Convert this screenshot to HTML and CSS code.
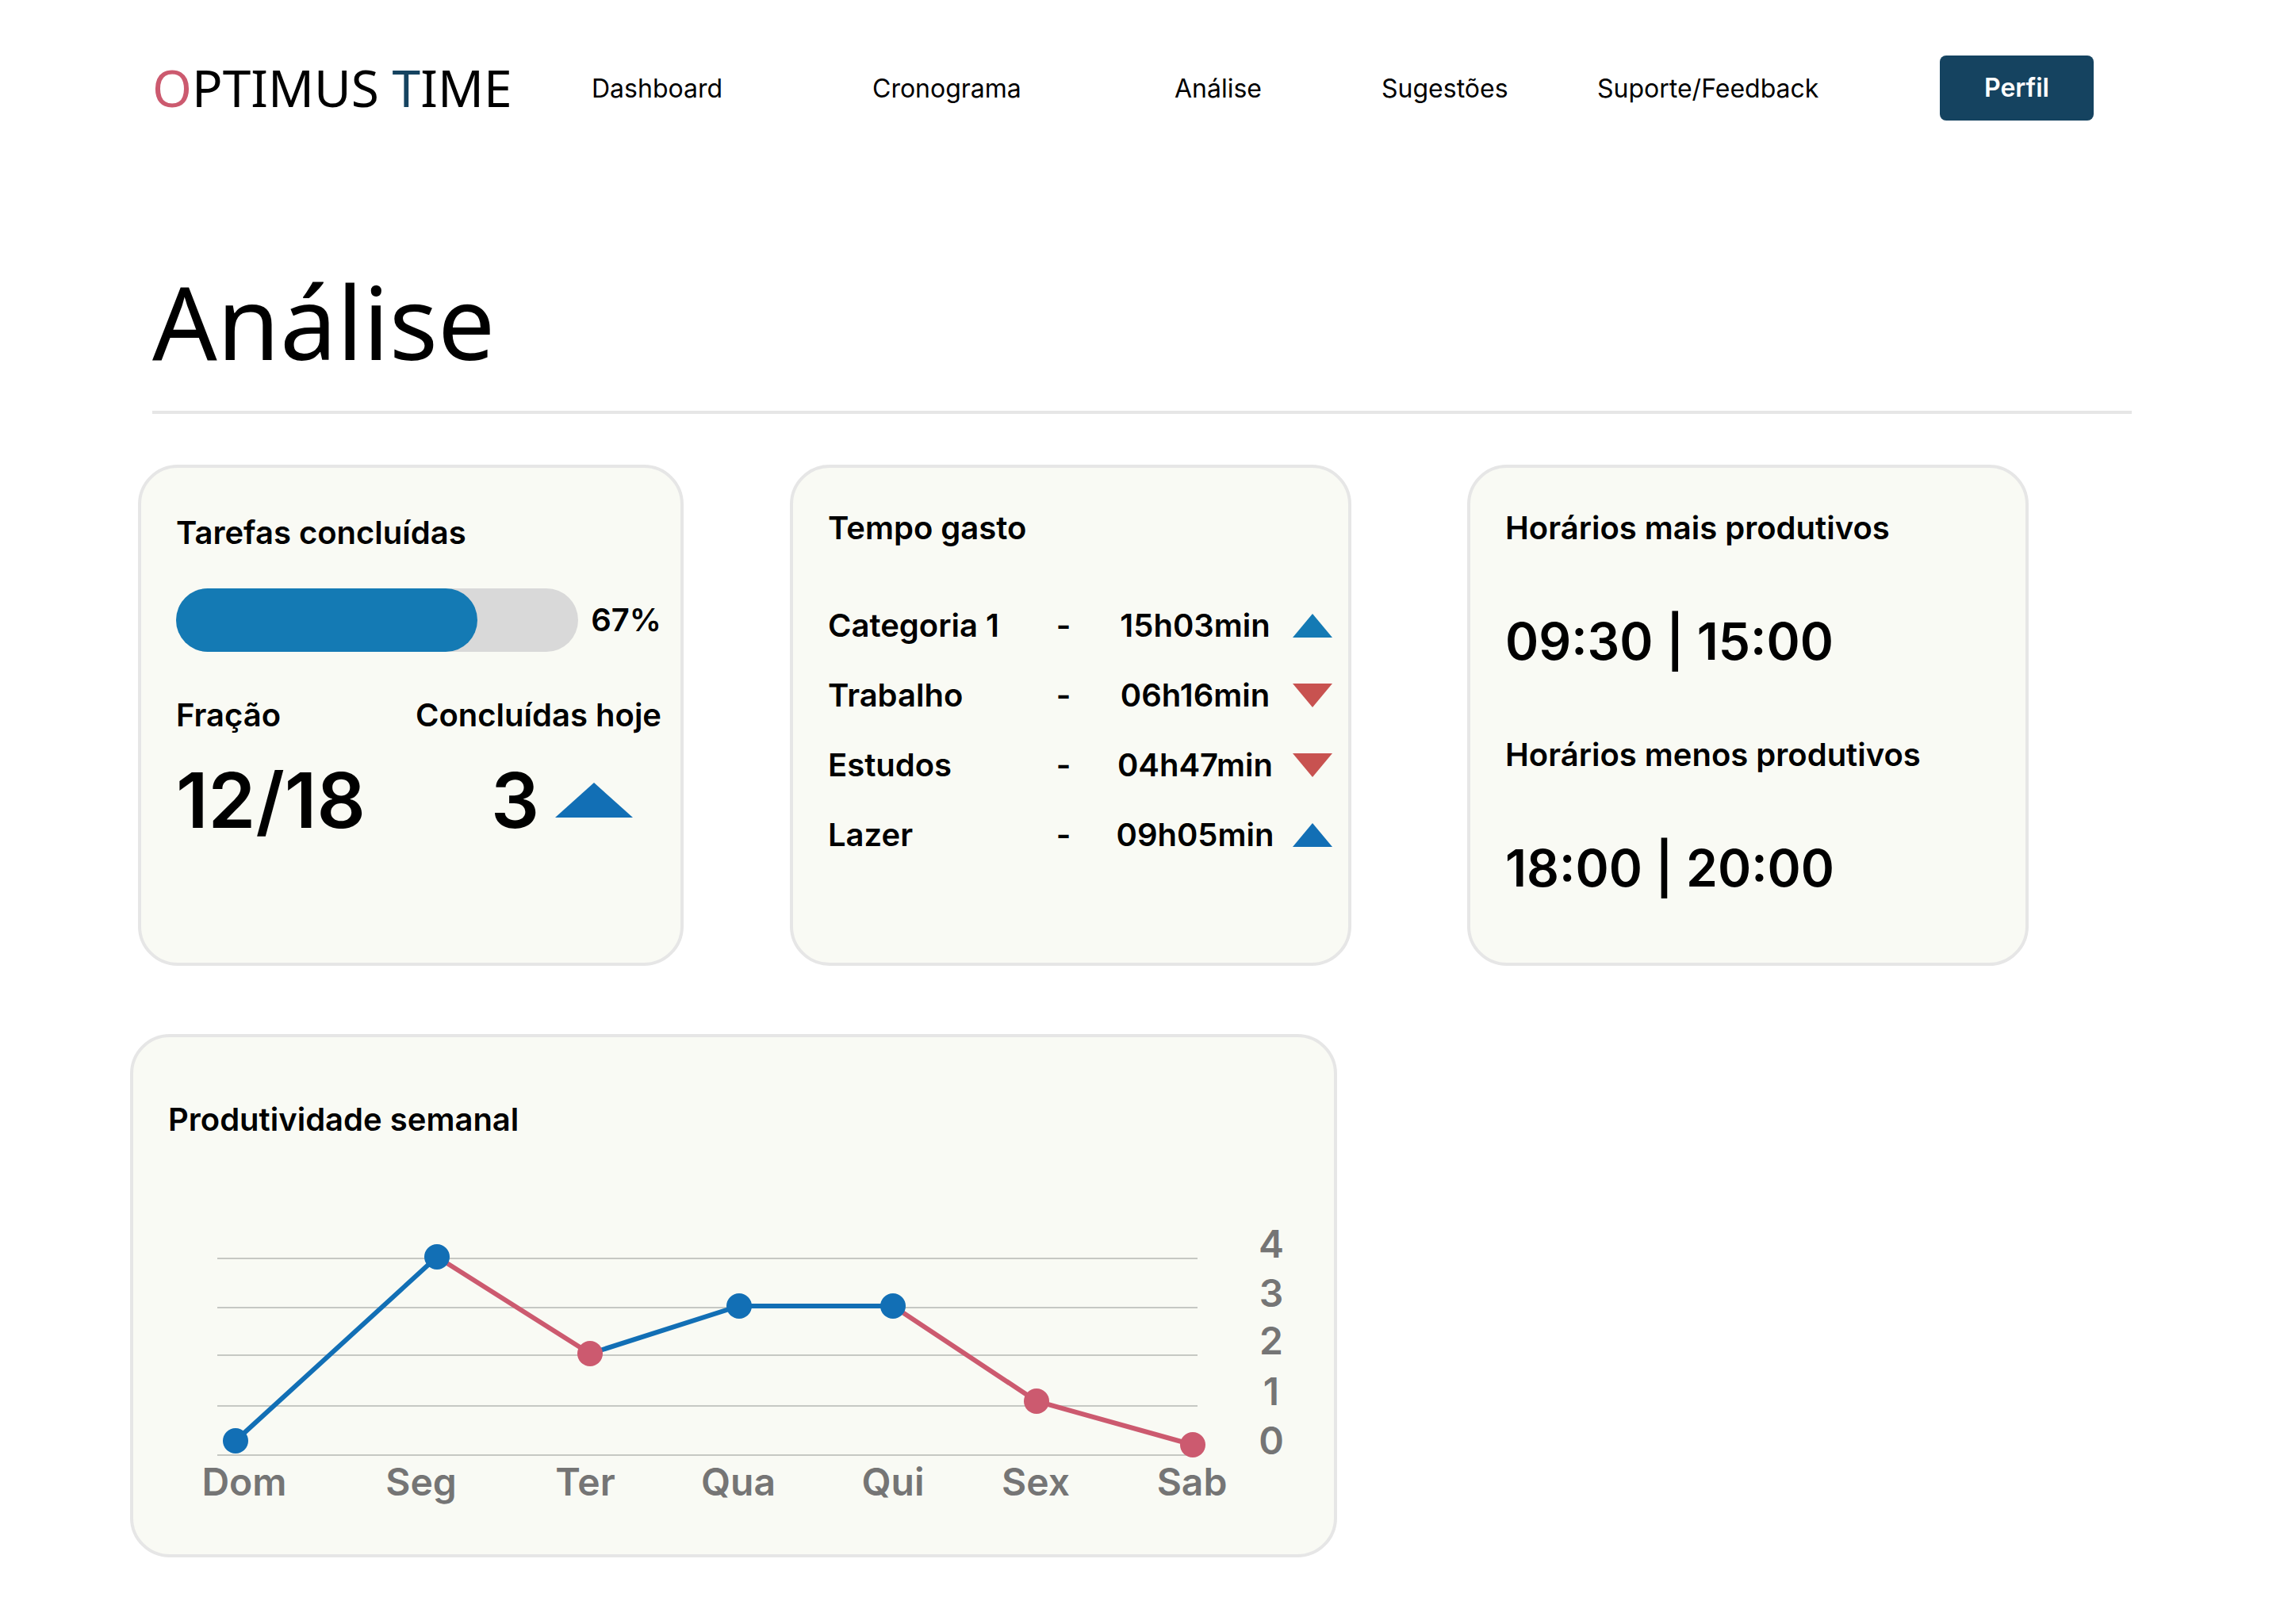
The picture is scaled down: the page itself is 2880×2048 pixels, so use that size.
FILE: index.html
```html
<!DOCTYPE html>
<html lang="pt-BR">
<head>
  <meta charset="utf-8">
  <meta name="viewport" content="width=device-width, initial-scale=1">
  <title>Optimus Time – Análise</title>
  <link rel="stylesheet" href="styles.css">
</head>
<body>
  <header class="topbar">
    <a class="logo" href="#"><span class="logo-o">O</span>PTIMUS <span class="logo-t">T</span>IME</a>
    <nav class="nav">
      <a href="#">Dashboard</a>
      <a href="#">Cronograma</a>
      <a href="#">Análise</a>
      <a href="#">Sugestões</a>
      <a href="#">Suporte/Feedback</a>
    </nav>
    <button class="profile" type="button">Perfil</button>
  </header>

  <main>
    <h1 class="page-title">Análise</h1>

    <div class="stats">
      <section class="card card-tasks">
        <h2>Tarefas concluídas</h2>
        <div class="progress-row">
          <div class="progress" role="progressbar" aria-label="Tarefas concluídas" aria-valuemin="0" aria-valuemax="100" aria-valuenow="67">
            <div class="progress-fill" style="width: 75%"></div>
          </div>
          <span class="percent">67%</span>
        </div>
        <div class="totals">
          <div>
            <h3>Fração</h3>
            <p class="total">12/18</p>
          </div>
          <div>
            <h3>Concluídas hoje</h3>
            <p class="total total-today">3
              <svg class="trend-large" viewBox="0 0 98 44" aria-hidden="true"><path class="fill-blue" d="M49 0L98 44H0Z"/></svg>
            </p>
          </div>
        </div>
      </section>

      <section class="card card-time">
        <h2>Tempo gasto</h2>
        <table class="times">
          <tr>
            <th scope="row">Categoria 1</th><td class="dash">-</td><td class="time">15h03min</td>
            <td class="trend"><svg viewBox="0 0 50 30" aria-hidden="true"><path class="fill-azure" d="M25 0L50 30H0Z"/></svg></td>
          </tr>
          <tr>
            <th scope="row">Trabalho</th><td class="dash">-</td><td class="time">06h16min</td>
            <td class="trend"><svg viewBox="0 0 50 30" aria-hidden="true"><path class="fill-red" d="M25 30L0 0H50Z"/></svg></td>
          </tr>
          <tr>
            <th scope="row">Estudos</th><td class="dash">-</td><td class="time">04h47min</td>
            <td class="trend"><svg viewBox="0 0 50 30" aria-hidden="true"><path class="fill-red" d="M25 30L0 0H50Z"/></svg></td>
          </tr>
          <tr>
            <th scope="row">Lazer</th><td class="dash">-</td><td class="time">09h05min</td>
            <td class="trend"><svg viewBox="0 0 50 30" aria-hidden="true"><path class="fill-blue" d="M25 0L50 30H0Z"/></svg></td>
          </tr>
        </table>
      </section>

      <section class="card card-hours">
        <h2>Horários mais produtivos</h2>
        <p class="hours">09:30 | 15:00</p>
        <h2>Horários menos produtivos</h2>
        <p class="hours">18:00 | 20:00</p>
      </section>
    </div>

    <div class="weekly">
      <section class="card card-chart">
        <h2>Produtividade semanal</h2>
        <svg class="chart" viewBox="0 0 1426 360" role="img" aria-label="Produtividade semanal">
          <path class="grid-lines" d="M62 47H1298M62 109H1298M62 169H1298M62 233H1298M62 295H1298"/>
          <path class="line-blue" d="M85 277L339 45M532 167L720 107H914"/>
          <path class="line-rose" d="M339 45L532 167M914 107L1095 227L1292 282"/>
          <g class="fill-blue">
            <circle cx="85" cy="277" r="16"/>
            <circle cx="339" cy="45" r="16"/>
            <circle cx="720" cy="107" r="16"/>
            <circle cx="914" cy="107" r="16"/>
          </g>
          <g class="fill-rose">
            <circle cx="532" cy="167" r="16"/>
            <circle cx="1095" cy="227" r="16"/>
            <circle cx="1292" cy="282" r="16"/>
          </g>
          <g class="axis">
            <text x="96" y="346">Dom</text>
            <text x="319" y="346">Seg</text>
            <text x="526" y="346">Ter</text>
            <text x="719" y="346">Qua</text>
            <text x="914" y="346">Qui</text>
            <text x="1094" y="346">Sex</text>
            <text x="1291" y="346">Sab</text>
            <text x="1391" y="46">4</text>
            <text x="1391" y="108">3</text>
            <text x="1391" y="168">2</text>
            <text x="1391" y="232">1</text>
            <text x="1391" y="294">0</text>
          </g>
        </svg>
      </section>
    </div>
  </main>
</body>
</html>
```
FILE: styles.css
```css
* {
  box-sizing: border-box;
}

body {
  margin: 0;
  background: #fff;
  color: #000;
  font-family: Inter, "Liberation Sans", sans-serif;
}

h1, h2, h3, p {
  margin: 0;
}

/* Header */
.topbar {
  display: grid;
  grid-template-columns: 554fr 1700fr 194px;
  align-items: center;
  padding: 70px 240px 0 192px;
}

.logo {
  color: #000;
  font-family: "Noto Sans", sans-serif;
  font-size: 64px;
  line-height: 82px;
  text-decoration: none;
  white-space: nowrap;
}

.logo-o {
  color: #cc5a6f;
}

.logo-t {
  color: #154360;
}

.nav {
  display: grid;
  grid-template-columns: 354fr 381fr 261fr 272fr 432fr;
  padding-top: 2px;
  font-size: 32px;
  line-height: 40px;
}

.nav a {
  color: #000;
  text-decoration: none;
}

.profile {
  height: 82px;
  padding: 0;
  border: 0;
  border-radius: 8px;
  background: #154360;
  color: #fff;
  font: 600 32px/40px Inter, sans-serif;
}

/* Page title */
.page-title {
  margin: 173px 192px 0;
  padding-bottom: 33px;
  border-bottom: 4px solid #e6e6e6;
  font-family: "Noto Sans", sans-serif;
  font-size: 128px;
  font-weight: 400;
  line-height: 160px;
}

/* Cards */
.stats {
  display: grid;
  grid-template-columns: 688fr 134fr 708fr 146fr 708fr;
  margin-top: 64px;
  padding: 0 322px 0 174px;
}

.card {
  border: 4px solid #e6e6e6;
  border-radius: 50px;
  background: #f9faf4;
  font-size: 40px;
  font-weight: 600;
  line-height: 48px;
}

.card h2,
.card h3 {
  font: inherit;
}

.card-tasks {
  grid-column: 1;
  padding: 58px 24px 80px 44px;
}

.progress-row {
  display: flex;
  align-items: center;
  gap: 16px;
  margin-top: 46px;
}

.progress {
  flex: 1;
  height: 80px;
  border-radius: 40px;
  background: #d9d9d9;
}

.progress-fill {
  height: 100%;
  border-radius: 40px;
  background: #147ab4;
}

.percent,
.total {
  font-kerning: none;
}

.totals {
  display: flex;
  justify-content: space-between;
  margin-top: 56px;
}

.total {
  margin-top: 25px;
  font-size: 96px;
  line-height: 116px;
}

.total-today {
  display: flex;
  align-items: center;
  justify-content: flex-end;
  gap: 20px;
  padding-right: 36px;
}

.trend-large {
  width: 98px;
  height: 44px;
}

.card-time {
  grid-column: 3;
  padding: 52px 20px 80px 44px;
}

.times {
  width: 100%;
  margin-top: 55px;
  border-collapse: collapse;
  table-layout: fixed;
}

.times th,
.times td {
  height: 88px;
  padding: 0;
  font-weight: 600;
  text-align: center;
}

.times th {
  width: 250px;
  text-align: left;
}

.times .dash {
  width: 94px;
}

.times .trend {
  width: 54px;
  text-align: right;
  line-height: 40px;
}

.trend svg {
  display: block;
  width: 50px;
  height: 30px;
  margin-left: auto;
}

.card-hours {
  grid-column: 5;
  display: flex;
  flex-direction: column;
  gap: 81px;
  padding: 52px 44px 81px;
}

.hours {
  font-size: 64px;
  line-height: 76px;
}

/* Weekly chart */
.weekly {
  display: grid;
  grid-template-columns: 1522fr 1194fr;
  margin-top: 86px;
  padding-left: 164px;
}

.card-chart {
  padding: 80px 44px 60px;
}

.chart {
  display: block;
  width: 100%;
  margin-top: 104px;
}

.grid-lines {
  stroke: #c6c8c3;
  stroke-width: 2;
}

.line-blue,
.line-rose {
  fill: none;
  stroke: #126fb5;
  stroke-width: 6;
}

.line-rose {
  stroke: #cc5a6f;
}

.axis {
  fill: #757575;
  font-size: 48px;
  text-anchor: middle;
}

.fill-azure {
  fill: #147ab4;
}

.fill-blue {
  fill: #126fb5;
}

.fill-red {
  fill: #c85250;
}

.fill-rose {
  fill: #cc5a6f;
}
```
